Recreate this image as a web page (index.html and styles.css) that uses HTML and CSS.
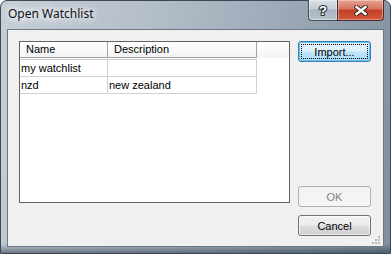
FILE: index.html
```html
<!DOCTYPE html>
<html lang="en">
<head>
  <meta charset="UTF-8" />
  <title>Open Watchlist</title>
  <link rel="stylesheet" href="styles.css">
</head>
<body>
  <div class="window">
    <!-- caption -->
    <div class="titlebar">
      <span class="title">Open Watchlist</span>
      <div class="caption-btns">
        <div class="cap cap-help">
          <svg width="12" height="14" viewBox="0 0 12 14">
            <text x="6" y="12" text-anchor="middle" font-family="Liberation Sans, Arial, sans-serif" font-weight="bold" font-size="13" fill="#fff" stroke="#2c3640" stroke-width="2.2" paint-order="stroke">?</text>
          </svg>
        </div>
        <div class="cap cap-close">
          <svg width="14" height="11" viewBox="0 0 14 11">
            <path d="M2.5 2 L11.5 9 M11.5 2 L2.5 9" stroke="#3b1f1a" stroke-width="4.4" stroke-linecap="square" />
            <path d="M2.5 2 L11.5 9 M11.5 2 L2.5 9" stroke="#fff" stroke-width="2.4" stroke-linecap="square" />
          </svg>
        </div>
      </div>
    </div>

    <!-- client area -->
    <div class="client">
      <div class="list">
        <div class="list-head">
          <div class="hcell col-name">Name</div>
          <div class="hcell col-desc">Description</div>
          <div class="hcell col-fill"></div>
        </div>
        <div class="rows">
          <div class="row">
            <div class="cell col-name">my watchlist</div>
            <div class="cell col-desc"></div>
          </div>
          <div class="row">
            <div class="cell col-name">nzd</div>
            <div class="cell col-desc">new zealand</div>
          </div>
        </div>
      </div>

      <div class="actions">
        <button class="btn btn-default">Import...</button>
        <div class="spacer"></div>
        <button class="btn" disabled>OK</button>
        <button class="btn">Cancel</button>
      </div>

      <svg class="grip" width="10" height="10" viewBox="0 0 10 10">
        <rect x="7" y="1" width="2" height="2" fill="#b8b8b8" />
        <rect x="4" y="4" width="2" height="2" fill="#b8b8b8" />
        <rect x="7" y="4" width="2" height="2" fill="#b8b8b8" />
        <rect x="1" y="7" width="2" height="2" fill="#b8b8b8" />
        <rect x="4" y="7" width="2" height="2" fill="#b8b8b8" />
        <rect x="7" y="7" width="2" height="2" fill="#b8b8b8" />
      </svg>
    </div>
  </div>
</body>
</html>
```

FILE: styles.css
```css
/* Win7 style dialog */
* {
  box-sizing: border-box;
  margin: 0;
  padding: 0;
}
body {
  width: 391px;
  height: 254px;
  overflow: hidden;
  background: #fff;
  font-family: "Liberation Sans", Arial, sans-serif;
  font-size: 11px;
  color: #000;
}
.window {
  width: 391px;
  height: 254px;
  display: flex;
  flex-direction: column;
  padding: 0 6px 6px;
  border: 1px solid #3c4753;
  border-radius: 7px 7px 0 0;
  background:
    linear-gradient(to top, rgba(38, 52, 66, 0.55) 0, rgba(38, 52, 66, 0) 9px),
    linear-gradient(100deg, #c6ced7 0%, #b4bec9 35%, #98a6b4 70%, #7f8f9f 100%);
}
/* Caption */
.titlebar {
  height: 28px;
  display: flex;
  align-items: flex-start;
}
.title {
  padding: 5px 0 0 1px;
  font-family: "Noto Sans", sans-serif;
  font-size: 12px;
  line-height: 16px;
  color: #111;
  text-shadow: 0 0 6px #fff, 0 0 10px #fff, 0 0 14px rgba(255, 255, 255, 0.8);
}
.caption-btns {
  display: flex;
  margin-left: auto;
  margin-top: -1px;
}
.cap {
  height: 21px;
  display: flex;
  align-items: center;
  justify-content: center;
  border: 1px solid #45505c;
  border-top: none;
  box-shadow: inset 0 0 0 1px rgba(255, 255, 255, 0.35);
}
.cap-help {
  width: 29px;
  border-right: none;
  border-radius: 0 0 0 4px;
  background: linear-gradient(#d9dfe5 0%, #c3ccd5 45%, #a7b3bf 50%, #b9c4ce 100%);
}
.cap-close {
  width: 47px;
  border-radius: 0 0 4px 0;
  border-color: #4a2a24;
  background: linear-gradient(#e6a392 0%, #d6735d 45%, #c23f26 50%, #d2583d 100%);
}
/* Client area */
.client {
  flex: 1;
  position: relative;
  display: flex;
  gap: 8px;
  padding: 11px 12px 10px 11px;
  background: #f0f0f0;
  border: 1px solid #6b7784;
}
/* List view */
.list {
  width: 271px;
  height: 162px;
  background: #fff;
  border: 1px solid #646464;
}
.list-head {
  display: flex;
  height: 16px;
  background: linear-gradient(#ffffff, #f2f3f5);
}
.hcell {
  height: 16px;
  line-height: 15px;
  padding-left: 6px;
  white-space: nowrap;
}
.hcell.col-name,
.hcell.col-desc {
  border-right: 1px solid #a4a4a4;
  border-bottom: 1px solid #a4a4a4;
}
.hcell.col-fill {
  flex: 1;
}
.col-name {
  width: 88px;
}
.col-desc {
  width: 149px;
}
.rows {
  width: 237px;
  margin-top: 1px;
  border-bottom: 1px solid #d0d0d0;
}
.row {
  display: flex;
  height: 17px;
  border-top: 1px solid #d0d0d0;
}
.cell {
  line-height: 16px;
  padding-left: 1px;
  white-space: nowrap;
  border-right: 1px solid #d0d0d0;
}
/* Buttons */
.actions {
  width: 73px;
  display: flex;
  flex-direction: column;
  gap: 8px;
}
.spacer {
  flex: 1;
}
.btn {
  width: 73px;
  height: 21px;
  font-family: "Liberation Sans", Arial, sans-serif;
  font-size: 11px;
  color: #000;
  border: 1px solid #707070;
  border-radius: 3px;
  background: linear-gradient(#f2f2f2 0%, #ebebeb 48%, #dddddd 52%, #cfcfcf 100%);
  box-shadow: inset 0 0 0 1px rgba(255, 255, 255, 0.7);
}
.btn-default {
  border-color: #3c7fb1;
  background: linear-gradient(#eaf6fd 0%, #d9f0fc 48%, #bee6fd 52%, #a7d9f5 100%);
  box-shadow: inset 0 0 0 1px #62c6f0;
  outline: 1px dotted #000;
  outline-offset: -4px;
}
.btn:disabled {
  color: #838383;
  border-color: #adb2b5;
  background: #f4f4f4;
  box-shadow: none;
}
.grip {
  position: absolute;
  right: 2px;
  bottom: 1px;
}
```
